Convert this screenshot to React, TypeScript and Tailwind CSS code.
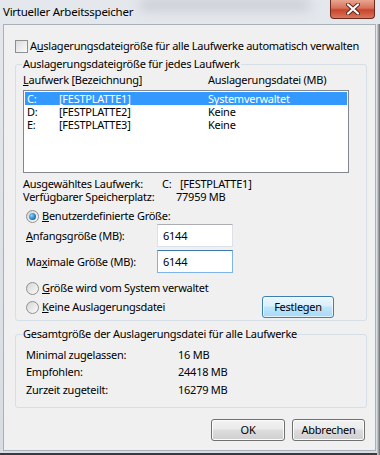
import React from "react";

const FONT = { fontFamily: '"Segoe UI", "Noto Sans", "Open Sans", sans-serif' };

const DRIVES = [
  { letter: "C:", label: "[FESTPLATTE1]", size: "Systemverwaltet", selected: true },
  { letter: "D:", label: "[FESTPLATTE2]", size: "Keine", selected: false },
  { letter: "E:", label: "[FESTPLATTE3]", size: "Keine", selected: false },
];

const TOTALS = [
  { label: "Minimal zugelassen:", value: "16 MB" },
  { label: "Empfohlen:", value: "24418 MB" },
  { label: "Zurzeit zugeteilt:", value: "16279 MB" },
];

// Win7-Radio: grauer Kreis, optional blauer Punkt
const Radio = ({ checked }: { checked?: boolean }) => (
  <span className="w-[13px] h-[13px] rounded-full border border-[#8e8f8f] bg-gradient-to-br from-[#d6d6d6] to-[#fbfbfb] flex items-center justify-center shrink-0">
    {checked && (
      <span className="w-[7px] h-[7px] rounded-full bg-[radial-gradient(circle_at_35%_35%,#8ad4ff,#1c6cb5_70%,#0d4d8a)]" />
    )}
  </span>
);

const Button = ({ children, active, className }: { children: React.ReactNode; active?: boolean; className?: string }) => (
  <div
    className={
      "h-[22px] rounded-[3px] border flex items-center justify-center text-black " +
      (active
        ? "border-[#3c7fb1] bg-[linear-gradient(#eaf6fd_0%,#d9f0fc_45%,#bee6fd_50%,#a7d9f5_100%)] shadow-[inset_0_0_0_1px_#ffffffaa]"
        : "border-[#707070] bg-[linear-gradient(#f2f2f2_0%,#ebebeb_45%,#dddddd_50%,#cfcfcf_100%)] shadow-[inset_0_0_0_1px_#fcfcfc]") +
      " " +
      (className ?? "")
    }
  >
    {children}
  </div>
);

const Field = ({ value, hover }: { value: string; hover?: boolean }) => (
  <div
    className={
      "w-[76px] h-[23px] bg-white border flex items-center pl-[5px] " +
      (hover ? "border-[#7eb4ea] border-t-[#3d7bad]" : "border-[#dde1e7] border-t-[#abadb3]")
    }
  >
    {value}
  </div>
);

export default function App() {
  return (
    <div
      className="w-[380px] h-[455px] relative overflow-hidden bg-[linear-gradient(#e4e8ed,#d8dde3)] text-[11px] leading-[16px] tracking-[-0.25px] text-black whitespace-nowrap"
      style={FONT}
    >
      {/* Titelleiste */}
      <div className="h-[24px] pl-[3px] pb-[1px] flex items-center relative">
        <div className="absolute left-[140px] top-0 w-[170px] h-[10px] bg-[#9aa0a8] opacity-40 blur-[6px]" />
        <span className="relative text-[11.5px] text-black">Virtueller Arbeitsspeicher</span>
      </div>
      <div className="absolute top-0 right-[5px] w-[45px] h-[19px] rounded-b-[4px] border border-t-0 border-[#6d2a1e] bg-[linear-gradient(#e9a690_0%,#d7715a_45%,#c8452c_55%,#d9755c_100%)] flex items-center justify-center">
        <svg width="14" height="12" viewBox="0 0 14 12">
          <path d="M2 1.5 L12 10.5 M12 1.5 L2 10.5" stroke="#5a2218" strokeWidth="4" strokeLinecap="round" />
          <path d="M2 1.5 L12 10.5 M12 1.5 L2 10.5" stroke="#ffffff" strokeWidth="2.2" strokeLinecap="round" />
        </svg>
      </div>

      {/* Client-Bereich */}
      <div className="ml-[3px] w-[373px] h-[427px] bg-[#f0f0f0] border border-[#a8b0ba] flex flex-col pl-[11px] pr-[9px]">
        <div className="mt-[13px] h-[16px] flex items-center gap-[2px]">
          <span className="w-[13px] h-[13px] shrink-0 border border-[#8e8f8f] bg-gradient-to-br from-[#dcdcdc] to-[#fbfbfb]" />
          <span>
            A<span className="underline">u</span>slagerungsdateigröße für alle Laufwerke automatisch verwalten
          </span>
        </div>

        <fieldset className="mt-[2px] w-[352px] h-[265px] border border-[#d5dfe5] rounded-[3px] pl-[7px] pr-[7px]">
          <legend className="px-[1px] -ml-[1px]">Auslagerungsdateigröße für jedes Laufwerk</legend>
          <div className="h-[16px] flex">
            <span className="w-[185px]">
              <span className="underline">L</span>aufwerk [Bezeichnung]
            </span>
            <span>Auslagerungsdatei (MB)</span>
          </div>
          <div className="mt-[2px] w-[326px] h-[83px] bg-white border border-[#828790] p-[1px]">
            {DRIVES.map((d) => (
              <div
                key={d.letter}
                className={"h-[13px] flex items-center leading-[13px] pl-[2px] " + (d.selected ? "bg-[#3399ff] text-white" : "")}
              >
                <span className="w-[32px]">{d.letter}</span>
                <span className="w-[149px]">{d.label}</span>
                <span>{d.size}</span>
              </div>
            ))}
          </div>

          <div className="mt-[4px] leading-[13px]">
            <div className="flex">
              <span className="w-[139px]">Ausgewähltes Laufwerk:</span>
              <span className="w-[18px]">C:</span>
              <span>[FESTPLATTE1]</span>
            </div>
            <div className="flex">
              <span className="w-[153px]">Verfügbarer Speicherplatz:</span>
              <span>77959 MB</span>
            </div>
          </div>

          <div className="mt-[5px] h-[16px] pl-[3px] flex items-center gap-[3px]">
            <Radio checked />
            <span>
              <span className="underline">B</span>enutzerdefinierte Größe:
            </span>
          </div>
          <div className="h-[23px] pl-[3px] flex items-center">
            <span className="w-[131px] mt-[1px]">
              <span className="underline">A</span>nfangsgröße (MB):
            </span>
            <Field value="6144" />
          </div>
          <div className="mt-[3px] h-[23px] pl-[3px] flex items-center">
            <span className="w-[131px] mt-[1px]">
              Ma<span className="underline">x</span>imale Größe (MB):
            </span>
            <Field value="6144" hover />
          </div>
          <div className="mt-[7px] h-[16px] pl-[3px] flex items-center gap-[3px]">
            <Radio />
            <span>
              <span className="underline">G</span>röße wird vom System verwaltet
            </span>
          </div>
          <div className="mt-[3px] h-[16px] pl-[3px] flex items-center">
            <Radio />
            <span className="ml-[3px] w-[220px]">
              <span className="underline">K</span>eine Auslagerungsdatei
            </span>
            <Button active className="w-[72px] h-[22px]">Festlegen</Button>
          </div>
        </fieldset>

        <fieldset className="mt-[5px] w-[352px] h-[82px] border border-[#d5dfe5] rounded-[3px] pl-[10px] pr-[7px]">
          <legend className="px-[1px] -ml-[4px]">Gesamtgröße der Auslagerungsdatei für alle Laufwerke</legend>
          <div className="mt-[4px] flex flex-col">
            {TOTALS.map((t) => (
              <div key={t.label} className="h-[17.5px] flex items-center">
                <span className="w-[152px]">{t.label}</span>
                <span>{t.value}</span>
              </div>
            ))}
          </div>
        </fieldset>

        <div className="mt-[11px] flex justify-end gap-[7px] pr-[1px]">
          <Button className="w-[74px]">OK</Button>
          <Button className="w-[73px]">Abbrechen</Button>
        </div>
      </div>
      <div className="absolute left-0 bottom-0 w-full h-[2px] bg-[#3a3a3a]" />
      <div className="absolute right-0 top-[24px] w-[3px] h-full bg-[linear-gradient(90deg,#cfd4da,#6a6a6a)]" />
    </div>
  );
}
